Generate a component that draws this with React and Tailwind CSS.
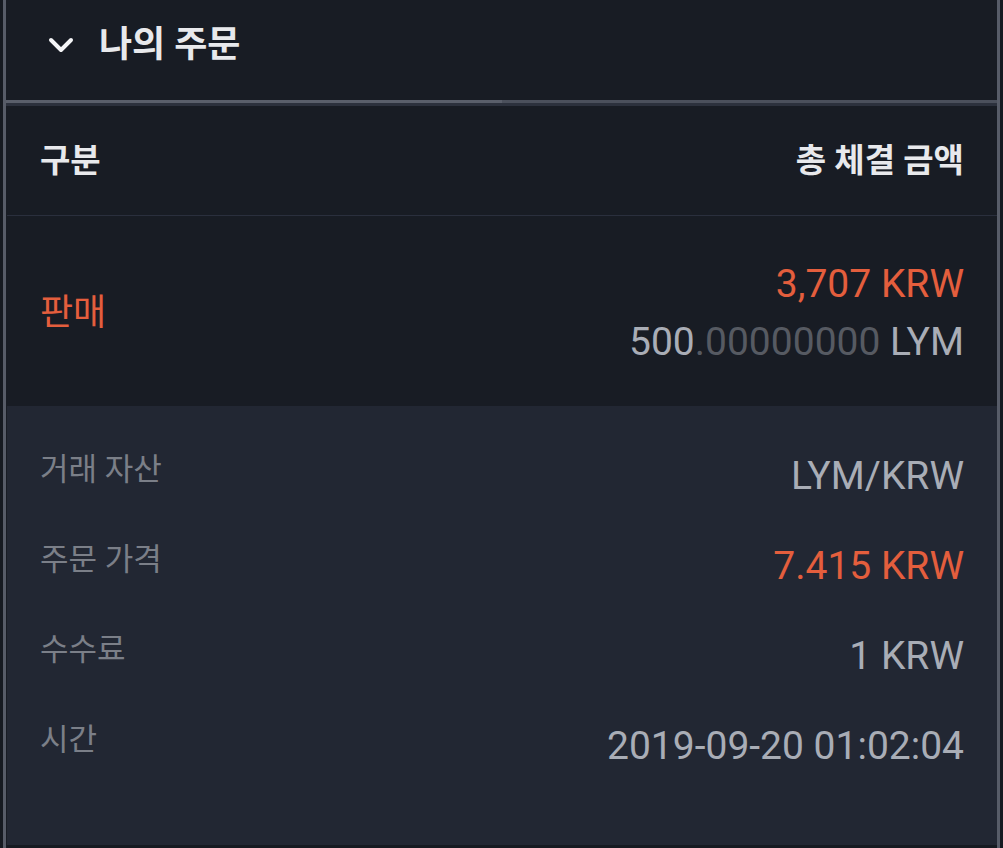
const font = "font-['Roboto','Noto_Sans_CJK_KR',sans-serif]";

function Chevron() {
  return (
    <svg width="30" height="20" viewBox="0 0 30 20" fill="none" className="shrink-0">
      <polyline
        points="5,5 15,15 25,5"
        stroke="#f4f5f7"
        strokeWidth="4"
        strokeLinecap="round"
        strokeLinejoin="round"
      />
    </svg>
  );
}

function DetailRow({ label, children }) {
  return (
    <div className="flex h-[90px] items-start justify-between">
      <span className="text-[31px] leading-[40px] text-[#7b7f88]">{label}</span>
      <span className="pt-[6px] text-[39px] leading-[40px]">{children}</span>
    </div>
  );
}

export default function App() {
  const details = [
    { label: '거래 자산', value: <span className="text-[#a9adb6]">LYM/KRW</span> },
    { label: '주문 가격', value: <span className="text-[#e45e3d]">7.415 KRW</span> },
    { label: '수수료', value: <span className="text-[#a9adb6]">1 KRW</span> },
    { label: '시간', value: <span className="text-[#a9adb6]">2019-09-20 01:02:04</span> },
  ];

  return (
    <div className={`h-[848px] bg-[#161a21] px-[3px] ${font}`}>
      <div className="flex h-full flex-col border-x-[3px] border-[#575c68] bg-[#181c24]">
        {/* 헤더 */}
        <div className="flex h-[100px] items-center gap-[23px] pb-[10px] pl-[40px]">
          <Chevron />
          <h2 className="text-[36px] font-bold leading-none text-[#e8e9ec]">나의 주문</h2>
        </div>

        {/* 탭 라인 */}
        <div className="flex h-[3px]">
          <div className="w-[496px] bg-[#5a5f6b]" />
          <div className="flex-1 bg-[#4b505c]" />
        </div>
        <div className="h-[3px] bg-[#2c313d]" />

        <div className="ml-px flex flex-1 flex-col">
          {/* 표 헤더 */}
          <div className="flex h-[110px] items-center justify-between border-b border-[#2a2f3d] px-[33px] text-[33px] font-bold text-[#e8e9ec]">
            <span>구분</span>
            <span>총 체결 금액</span>
          </div>

          {/* 판매 */}
          <div className="flex h-[190px] items-center justify-between px-[33px] pt-[4px]">
            <span className="text-[36px] text-[#e45e3d]">판매</span>
            <div className="flex flex-col items-end text-[39px] leading-[58px]">
              <span className="text-[#e45e3d]">3,707 KRW</span>
              <span className="text-[#a9adb6]">
                500<span className="text-[#565a62]">.00000000</span> LYM
              </span>
            </div>
          </div>

          {/* 상세 */}
          <div className="flex-1 bg-[#222733] px-[33px] pt-[44px]">
            {details.map((d) => (
              <DetailRow key={d.label} label={d.label}>
                {d.value}
              </DetailRow>
            ))}
          </div>
          <div className="h-[3px] bg-[#161a21]" />
        </div>
      </div>
    </div>
  );
}
